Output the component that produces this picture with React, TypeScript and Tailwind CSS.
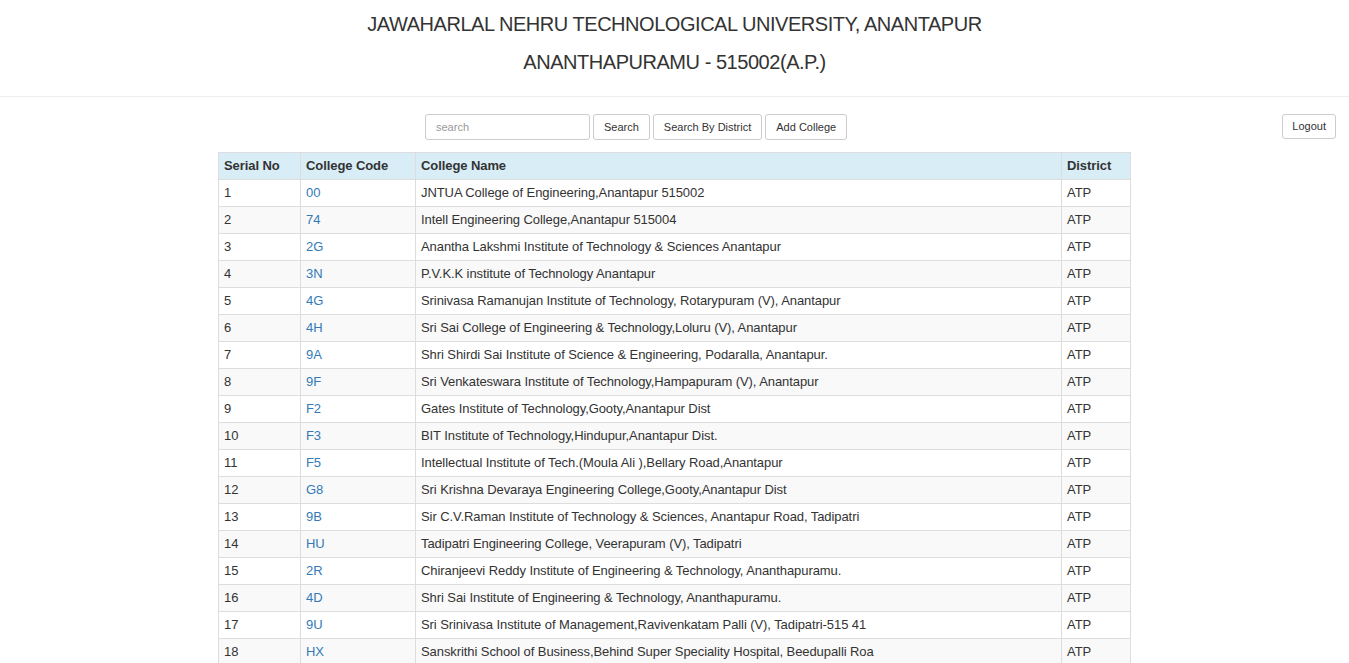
import React from 'react';

const colleges: [string, string][] = [
  ['00', 'JNTUA College of Engineering,Anantapur 515002'],
  ['74', 'Intell Engineering College,Anantapur 515004'],
  ['2G', 'Anantha Lakshmi Institute of Technology & Sciences Anantapur'],
  ['3N', 'P.V.K.K institute of Technology Anantapur'],
  ['4G', 'Srinivasa Ramanujan Institute of Technology, Rotarypuram (V), Anantapur'],
  ['4H', 'Sri Sai College of Engineering & Technology,Loluru (V), Anantapur'],
  ['9A', 'Shri Shirdi Sai Institute of Science & Engineering, Podaralla, Anantapur.'],
  ['9F', 'Sri Venkateswara Institute of Technology,Hampapuram (V), Anantapur'],
  ['F2', 'Gates Institute of Technology,Gooty,Anantapur Dist'],
  ['F3', 'BIT Institute of Technology,Hindupur,Anantapur Dist.'],
  ['F5', 'Intellectual Institute of Tech.(Moula Ali ),Bellary Road,Anantapur'],
  ['G8', 'Sri Krishna Devaraya Engineering College,Gooty,Anantapur Dist'],
  ['9B', 'Sir C.V.Raman Institute of Technology & Sciences, Anantapur Road, Tadipatri'],
  ['HU', 'Tadipatri Engineering College, Veerapuram (V), Tadipatri'],
  ['2R', 'Chiranjeevi Reddy Institute of Engineering & Technology, Ananthapuramu.'],
  ['4D', 'Shri Sai Institute of Engineering & Technology, Ananthapuramu.'],
  ['9U', 'Sri Srinivasa Institute of Management,Ravivenkatam Palli (V), Tadipatri-515 41'],
  ['HX', 'Sanskrithi School of Business,Behind Super Speciality Hospital, Beedupalli Roa'],
];

const btn = 'h-[26px] text-[11px] tracking-normal leading-none text-[#333] bg-white border border-[#ccc] rounded-[3px]';
const cell = 'border border-[#ddd] px-[5px] py-[3px] leading-[20px] text-left align-top';

export default function App() {
  return (
    <div className="min-h-screen bg-white text-[#333] text-[13px] tracking-[-0.08px]" style={{ fontFamily: '"Liberation Sans", Arial, sans-serif' }}>
      <div className="border-b border-[#eee] pt-[10px] pb-[20px] text-center text-[20px] leading-[28px] tracking-[-0.46px] text-[#333]">
        <div>JAWAHARLAL NEHRU TECHNOLOGICAL UNIVERSITY, ANANTAPUR</div>
        <div className="mt-[10px]">ANANTHAPURAMU - 515002(A.P.)</div>
      </div>

      <div className="flex items-start pt-[17px]">
        <div className="ml-[425px] flex gap-[3px]">
          <input
            type="text"
            placeholder="search"
            className="w-[165px] h-[26px] px-[10px] text-[11px] tracking-normal border border-[#ccc] rounded-[3px] placeholder:text-[#999] outline-none"
          />
          <button className={`${btn} px-[10px]`}>Search</button>
          <button className={`${btn} px-[10px]`}>Search By District</button>
          <button className={`${btn} px-[10px]`}>Add College</button>
        </div>
        <button className={`${btn} px-[9px] ml-auto mr-[13px] !h-[25px]`}>Logout</button>
      </div>

      <table className="mx-auto mt-[12px] w-[912px] table-fixed border-collapse">
        <colgroup>
          <col className="w-[82px]" />
          <col className="w-[115px]" />
          <col className="w-[646px]" />
          <col className="w-[69px]" />
        </colgroup>
        <tbody>
          <tr className="bg-[#d9edf7] font-bold">
            <td className={cell}>Serial No</td>
            <td className={cell}>College Code</td>
            <td className={cell}>College Name</td>
            <td className={cell}>District</td>
          </tr>
          {colleges.map(([code, name], i) => (
            <tr key={code} className={i % 2 === 1 ? 'bg-[#f9f9f9]' : 'bg-white'}>
              <td className={cell}>{i + 1}</td>
              <td className={cell}>
                <a href="#" className="text-[#337ab7]">{code}</a>
              </td>
              <td className={`${cell} whitespace-nowrap overflow-hidden`}>{name}</td>
              <td className={cell}>ATP</td>
            </tr>
          ))}
        </tbody>
      </table>
    </div>
  );
}
